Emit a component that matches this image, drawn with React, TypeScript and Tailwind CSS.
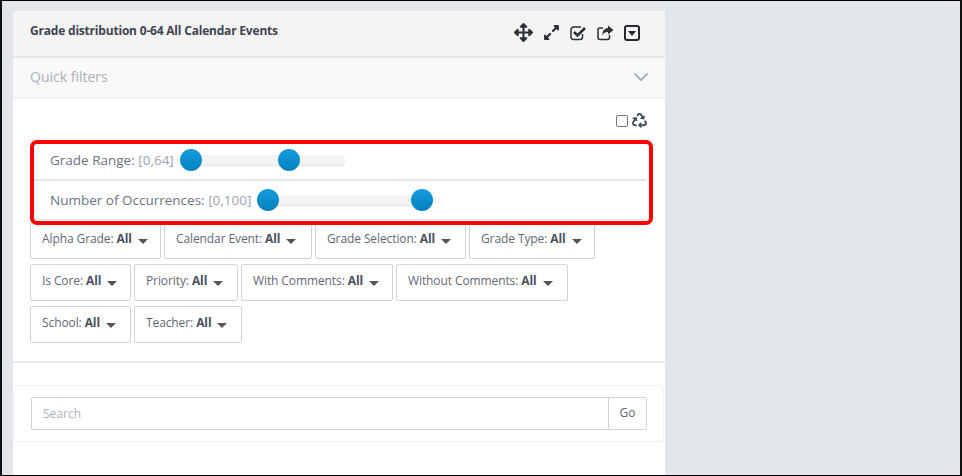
import { FaArrowsAlt, FaExpandAlt, FaRecycle } from "react-icons/fa";

const filterRows = [
  [
    { label: "Alpha Grade:", w: "w-[131px]" },
    { label: "Calendar Event:", w: "w-[148px]" },
    { label: "Grade Selection:", w: "w-[151px]" },
    { label: "Grade Type:", w: "w-[126px]" },
  ],
  [
    { label: "Is Core:", w: "w-[101px]" },
    { label: "Priority:", w: "w-[104px]" },
    { label: "With Comments:", w: "w-[152px]" },
    { label: "Without Comments:", w: "w-[172px]" },
  ],
  [
    { label: "School:", w: "w-[101px]" },
    { label: "Teacher:", w: "w-[108px]" },
  ],
];

function CheckSquareIcon() {
  return (
    <svg width="17" height="16" viewBox="0 0 17 16" fill="none">
      <path d="M12.5 9v3a2.5 2.5 0 0 1-2.5 2.5H3.5A2.5 2.5 0 0 1 1 12V4.5A2.5 2.5 0 0 1 3.5 2H11" stroke="#2b2f36" strokeWidth="1.5" />
      <path d="M4 7l3.5 3.5L15 3" stroke="#2b2f36" strokeWidth="2.6" />
    </svg>
  );
}

function ShareSquareIcon() {
  return (
    <svg width="17" height="16" viewBox="0 0 17 16" fill="none">
      <path d="M12.5 10v2.5a2 2 0 0 1-2 2H3a2 2 0 0 1-2-2V5a2 2 0 0 1 2-2h3" stroke="#2b2f36" strokeWidth="1.5" />
      <path d="M11 0.5L16.5 5 11 9.5V7C8 7 6.2 8 5.5 10.5 5.2 6.5 7 3.2 11 3z" fill="#2b2f36" />
    </svg>
  );
}

function CaretSquareIcon() {
  return (
    <svg width="16" height="16" viewBox="0 0 16 16" fill="none">
      <rect x="1" y="1" width="14" height="14" rx="2" stroke="#23262c" strokeWidth="2" />
      <path d="M4 6h8l-4 5z" fill="#23262c" />
    </svg>
  );
}

function Handle() {
  return <span className="h-[22px] w-[22px] shrink-0 rounded-full bg-gradient-to-b from-[#149bdf] to-[#0480be]" />;
}

function SliderRow({ label, range, track, gap, last }: { label: string; range: string; track: string; gap: string; last?: boolean }) {
  return (
    <div className={`flex items-center pl-[20px] ${last ? "h-[39px] border-b border-[#e6e9ec]" : "h-[40px] border-b-2 border-[#e4e7ea]"}`}>
      <span className="text-[13.5px] whitespace-nowrap text-[#6b7280]">
        {label} <span className="text-[#9aa5b1]">{range}</span>
      </span>
      <div className={`ml-[6px] flex h-[11px] items-center rounded-[4px] border-b border-[#e2e2e2] bg-[#f4f4f4] ${track}`}>
        <div className={`flex items-center ${gap}`}>
          <Handle />
          <Handle />
        </div>
      </div>
    </div>
  );
}

export default function App() {
  return (
    <div className="h-[476px] w-[962px] overflow-hidden border-y border-x-2 border-y-black border-x-[#111] bg-[#e2e5ea] pl-[11px] pt-[10px] font-['Open_Sans','Noto_Sans',sans-serif]">
      <div className="h-[470px] w-[652px] rounded-t-[3px] bg-white">
        <div className="flex h-[47px] items-start justify-between border-b-2 border-[#e2e7e7] bg-[#f4f4f4] pl-[17px] pr-[25px] pt-[12px]">
          <h1 className="text-[12px] leading-[16px] font-bold tracking-[-0.2px] text-[#3f4450]">Grade distribution 0-64 All Calendar Events</h1>
          <div className="flex items-center gap-[10px] text-[#2b2f36]">
            <FaArrowsAlt size={19} />
            <FaExpandAlt size={17} />
            <CheckSquareIcon />
            <ShareSquareIcon />
            <CaretSquareIcon />
          </div>
        </div>
        <div className="flex h-[40px] items-center justify-between border-b border-[#e8ecec] bg-[#f9f9f9] pb-[2px] pl-[17px] pr-[16px]">
          <span className="text-[14px] text-[#a9b1bb]">Quick filters</span>
          <svg width="16" height="10" viewBox="0 0 16 10" fill="none">
            <path d="M1.5 1.5L8 8l6.5-6.5" stroke="#a9b4bd" strokeWidth="2" />
          </svg>
        </div>
        <div className="relative px-[17px]">
          <div className="flex h-[43px] items-center justify-end gap-[4px] pr-[1px] pb-[2px] pt-[4px]">
            <span className="h-[12px] w-[12px] rounded-[2px] border border-[#767676] bg-white" />
            <FaRecycle size={15} className="text-[#3f4f5f]" />
          </div>
          <div className="mr-[2px]">
            <SliderRow label="Grade Range:" range="[0,64]" track="w-[165px]" gap="gap-[76px]" />
            <SliderRow label="Number of Occurrences:" range="[0,100]" track="w-[176px]" gap="gap-[132px]" last />
          </div>
          <div className="pointer-events-none absolute left-[17px] top-[42px] h-[85px] w-[623px] rounded-[7px] border-4 border-[#ff0000]" />
          <div className="mt-[2px] flex flex-col gap-[5px]">
            {filterRows.map((row) => (
              <div className="flex gap-[3px]" key={row[0].label}>
                {row.map((f) => (
                  <button className={`flex h-[37px] items-center gap-[6px] rounded-[2px] border border-[#ccd6d8] bg-white pb-[4px] pl-[11px] text-[12px] tracking-[-0.1px] text-[#5f6773] ${f.w}`} key={f.label}>
                    <span className="whitespace-nowrap">
                      {f.label} <b className="text-[#4a505b]">All</b>
                    </span>
                    <span className="mt-[6px] h-0 w-0 border-x-[5px] border-t-[5px] border-x-transparent border-t-[#555]" />
                  </button>
                ))}
              </div>
            ))}
          </div>
        </div>
        <div className="mt-[18px] h-[2px] bg-[#e2e7e7]" />
        <div className="mx-[1px] mt-[22px] flex h-[57px] items-center rounded-[3px] border border-[#f0f2f2] px-[16px]">
          <div className="flex h-[33px] flex-1 items-center rounded-l-[2px] border border-[#ccd6d8] pl-[11px] text-[12px] text-[#a9b1bb]">Search</div>
          <button className="h-[33px] w-[38px] rounded-r-[2px] border border-l-0 border-[#ccd6d8] pb-[2px] text-[12px] text-[#5f6773]">Go</button>
        </div>
      </div>
    </div>
  );
}
